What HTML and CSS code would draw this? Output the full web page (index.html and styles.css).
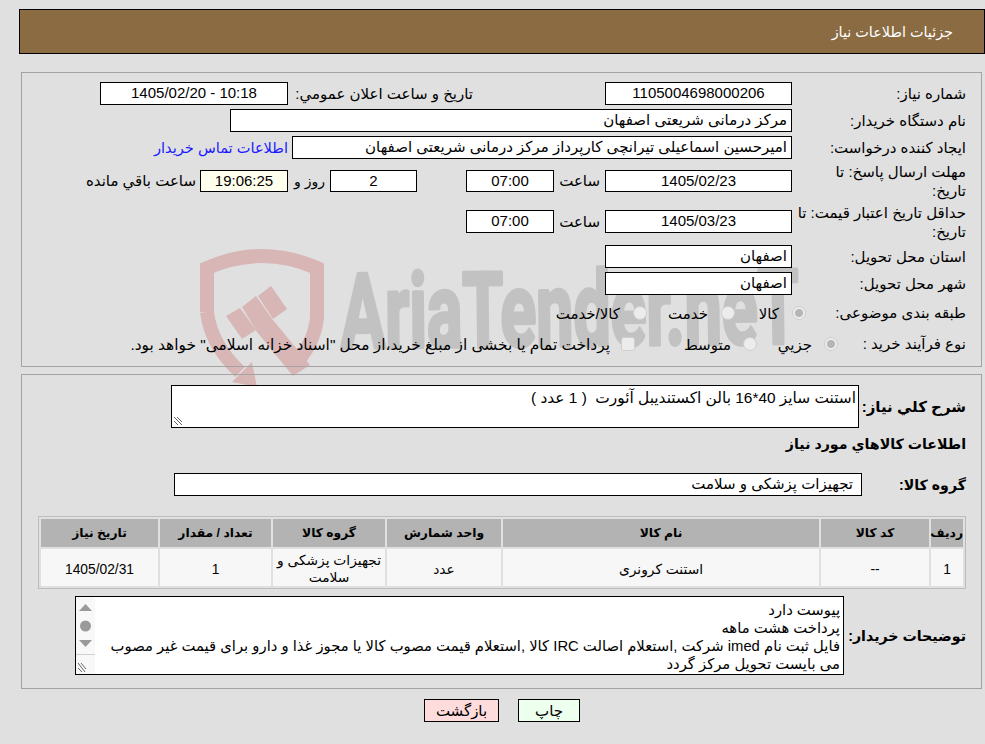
FILE: index.html
```html
<!DOCTYPE html>
<html lang="fa" dir="rtl">
<head>
<meta charset="utf-8">
<title>جزئیات اطلاعات نیاز</title>
<link rel="stylesheet" href="styles.css">
</head>
<body>
<svg class="watermark" viewBox="0 0 985 744" aria-hidden="true">
  <g class="wm-red">
    <path class="wm-line" d="M207 312V268Q262 244 317 268V318Q314 345 293 366"/>
    <path class="wm-line" d="M207 312Q211 345 240 372"/>
    <polygon points="252,362 257,387 232,382"/>
    <polygon points="226,316 240,308 256,330 242,339"/>
    <polygon points="242,307 256,296 273,320 310,365 293,376 257,332"/>
    <polygon points="258,296 271,286 287,309 273,319"/>
  </g>
  <text class="wm-text" x="341" y="348" textLength="458" lengthAdjust="spacingAndGlyphs" transform="rotate(-0.6 341 348)">AriaTender.neT</text>
</svg>
<header class="title-bar"><span>جزئیات اطلاعات نیاز</span></header>

<section class="panel panel-top">
  <div class="row r23">
    <label class="lbl">شماره نیاز:</label>
    <div class="fld w187 center">1105004698000206</div>
    <label class="lbl-inline ms132">تاریخ و ساعت اعلان عمومي:</label>
    <div class="fld w188 center" dir="ltr">1405/02/20 - 10:18</div>
  </div>
  <div class="row r23">
    <label class="lbl">نام دستگاه خریدار:</label>
    <div class="fld w562">مرکز درمانی شریعتی اصفهان</div>
  </div>
  <div class="row r23">
    <label class="lbl">ایجاد کننده درخواست:</label>
    <div class="fld w500">امیرحسین اسماعیلی تیرانچی کارپرداز مرکز درمانی شریعتی اصفهان</div>
    <a class="contact" href="#">اطلاعات تماس خریدار</a>
  </div>
  <div class="row r36">
    <label class="lbl">مهلت ارسال پاسخ: تا<br>تاریخ:</label>
    <div class="fld w187 center h22">1405/02/23</div>
    <span class="t-hour">ساعت</span>
    <div class="fld w88 center h22">07:00</div>
    <div class="fld w87 center h22 ms49">2</div>
    <span class="t-day">روز و</span>
    <div class="fld w88 center h22 timer">19:06:25</div>
    <span class="t-left">ساعت باقي مانده</span>
  </div>
  <div class="row r37">
    <label class="lbl">حداقل تاریخ اعتبار قیمت: تا<br>تاریخ:</label>
    <div class="fld w187 center">1405/03/23</div>
    <span class="t-hour">ساعت</span>
    <div class="fld w88 center">07:00</div>
  </div>
  <div class="row r23">
    <label class="lbl">استان محل تحویل:</label>
    <div class="fld w187">اصفهان</div>
  </div>
  <div class="row r23">
    <label class="lbl">شهر محل تحویل:</label>
    <div class="fld w187">اصفهان</div>
  </div>
  <div class="row r30">
    <label class="lbl lbl-up">طبقه بندی موضوعی:</label>
    <div class="choices cat">
      <span class="opt"><i class="radio on"></i>کالا</span>
      <span class="opt"><i class="radio"></i>خدمت</span>
      <span class="opt"><i class="radio"></i>کالا/خدمت</span>
    </div>
  </div>
  <div class="row r24">
    <label class="lbl lbl-up">نوع فرآیند خرید :</label>
    <div class="choices proc">
      <span class="opt"><i class="radio on"></i>جزيي</span>
      <span class="opt"><i class="radio"></i>متوسط</span>
      <span class="opt opt-long"><i class="check"></i>پرداخت تمام یا بخشی از مبلغ خرید،از محل "اسناد خزانه اسلامی" خواهد بود.</span>
    </div>
  </div>
</section>

<section class="panel panel-bottom">
  <div class="row desc-row">
    <label class="lbl-b l107">شرح کلي نياز:</label>
    <div class="area area-desc">استنت سایز 40*16 بالن اکستندیبل آئورت&nbsp; ( 1 عدد )
      <svg class="grip" viewBox="0 0 10 10"><path d="M1 1L9 9M1 5L5 9M4 1L9 6"/></svg>
    </div>
  </div>
  <h2 class="sub">اطلاعات کالاهاي مورد نياز</h2>
  <div class="row group-row">
    <label class="lbl-b l104">گروه کالا:</label>
    <div class="fld w688 group">تجهیزات پزشکی و سلامت</div>
  </div>
  <table class="items">
    <colgroup>
      <col class="c1"><col class="c2"><col class="c3"><col class="c4"><col class="c5"><col class="c6"><col class="c7">
    </colgroup>
    <thead>
      <tr><th>ردیف</th><th>کد کالا</th><th>نام کالا</th><th>واحد شمارش</th><th>گروه کالا</th><th>تعداد / مقدار</th><th>تاریخ نیاز</th></tr>
    </thead>
    <tbody>
      <tr><td>1</td><td>--</td><td>استنت کرونری</td><td>عدد</td><td>تجهیزات پزشکی و سلامت</td><td>1</td><td>1405/02/31</td></tr>
    </tbody>
  </table>
  <div class="row notes-row">
    <label class="lbl-b l122">توضیحات خریدار:</label>
    <div class="area area-notes">
      <div class="notes-text">پیوست دارد<br>پرداخت هشت ماهه<br>فایل ثبت نام imed شرکت ,استعلام اصالت IRC کالا ,استعلام قیمت مصوب کالا یا مجوز غذا و دارو برای قیمت غیر مصوب<br>می بایست تحویل مرکز گردد</div>
      <div class="scroll">
        <svg class="scroll-svg" viewBox="0 0 19 77">
          <path class="sb-arrow" d="M3 14L9.500 7L16 14Z"/>
          <circle class="sb-arrow" cx="9.500" cy="29" r="5.500"/>
          <path class="sb-arrow" d="M3 43L16 43L9.500 50Z"/>
          <path class="sb-sep" d="M0 57.500H19"/>
          <path class="sb-grip" d="M2 66L9 75M2 71L6 75M5 66L10 72"/>
        </svg>
      </div>
    </div>
  </div>
</section>

<div class="actions">
  <button class="btn btn-print" type="button">چاپ</button>
  <button class="btn btn-back" type="button">بازگشت</button>
</div>
</body>
</html>
```
FILE: styles.css
```css
* { box-sizing: border-box; }
html, body { margin: 0; padding: 0; }
body {
  position: relative;
  width: 985px;
  height: 744px;
  overflow: hidden;
  background: #e0e0e0;
  color: #000;
  font-family: "Liberation Sans", "DejaVu Sans", sans-serif;
  font-size: 15px;
  line-height: 18px;
}
.watermark { position: absolute; left: 0; top: 0; width: 985px; height: 744px; z-index: -1; direction: ltr; }
.wm-red { fill: #d8b6b6; }
.wm-line { fill: none; stroke: #d8b6b6; stroke-width: 14; }
.wm-text {
  direction: ltr;
  text-anchor: start;
  font-family: Roboto, sans-serif;
  font-weight: 700;
  font-size: 104px;
  fill: #c2c2c2;
  stroke: #c2c2c2;
  stroke-width: 4;
  stroke-linejoin: round;
}

.title-bar {
  margin: 9px 0 0 19px;
  width: 966px;
  height: 45px;
  padding-right: 31px;
  display: flex;
  align-items: center;
  background: #8b6b42;
  border: 1px solid #000;
  color: #fff;
  font-size: 14.400px;
}

.panel { margin-right: 3px; width: 961px; border: 1px solid #a3a3a3; }
.panel-top { margin-top: 18px; height: 295px; padding: 9px 15px 0 0; display: flex; flex-direction: column; gap: 4px; }
.panel-bottom { margin-top: 7px; height: 315px; padding: 10px 15px 0 0; }

.row { display: flex; align-items: center; }
.r23 { height: 23px; }
.r36 { height: 36px; }
.r37 { height: 37px; margin-bottom: 1px; }
.r30 { height: 30px; }
.r24 { height: 24px; }

.lbl { width: 174px; flex: none; line-height: 19px; }
.lbl-up { margin-bottom: 3px; }
.lbl-inline { width: 180px; flex: none; margin-left: 5px; white-space: nowrap; }
.lbl-b { flex: none; font-weight: 700; font-size: 14.200px; white-space: nowrap; }
.l107 { width: 107px; font-size: 15px; }
.l104 { width: 104px; }
.l122 { width: 122px; }
.ms132 { margin-right: 132px; }
.ms49 { margin-right: 49px; }

.fld {
  height: 23px;
  flex: none;
  padding: 0 4px;
  background: #fff;
  border: 1px solid #000;
  line-height: 20px;
  white-space: nowrap;
}
.h22 { height: 22px; }
.center { text-align: center; }
.w187 { width: 187px; }
.w188 { width: 188px; }
.w88 { width: 88px; }
.w87 { width: 87px; }
.w562 { width: 562px; }
.w500 { width: 500px; }
.w688 { width: 688px; }
.timer { background: #ffffee; }

.contact { margin-right: 4px; color: #1a1aff; font-size: 14.600px; text-decoration: none; white-space: nowrap; }
.t-hour { width: 51px; padding-right: 5px; flex: none; }
.t-day { width: 42px; padding-right: 5px; flex: none; white-space: nowrap; font-size: 14px; }
.t-left { padding-right: 4px; white-space: nowrap; }

.choices { display: flex; align-items: center; white-space: nowrap; }
.opt { display: flex; align-items: center; }
.opt-long { font-size: 15.400px; }
.radio, .check {
  width: 14px;
  height: 14px;
  flex: none;
  margin-bottom: 3px;
  border: 1px solid #cfcfcf;
  background: #ececec;
}
.radio { border-radius: 50%; margin-left: 12px; }
.check { border-radius: 3px; margin-left: 11px; }
.radio.on { background: radial-gradient(circle, #b5b5b5 0 3.500px, #ececec 4.500px); }
.cat { margin-right: -14px; }
.cat .radio { margin-left: 13px; }
.cat .opt:nth-child(1) { width: 71px; }
.cat .opt:nth-child(2) { width: 88px; }
.proc { margin-right: -46px; }
.proc .opt:nth-child(1) { width: 81px; }
.proc .opt:nth-child(2) { width: 122px; }

.desc-row { height: 43px; }
.area { position: relative; flex: none; background: #fff; border: 1px solid #000; }
.area-desc { width: 688px; height: 43px; padding: 3px 2px 0 0; font-size: 15.400px; }
.grip { position: absolute; left: 1px; bottom: 1px; width: 10px; height: 10px; }
.grip path { fill: none; stroke: #666; stroke-width: 1; }
.sub { margin: 7px 0 0; height: 19px; font-size: 14.200px; line-height: 19px; font-weight: 700; }
.group-row { margin-top: 19px; height: 23px; }
.group { padding-right: 8px; }

.items {
  margin: 20px 0 0 0;
  width: 928px;
  table-layout: fixed;
  border-collapse: separate;
  border-spacing: 2px;
  border: 1px solid #bcbcbc;
}
.c1 { width: 32px; } .c2 { width: 108px; } .c3 { width: 316px; } .c4 { width: 114px; } .c5 { width: 112px; } .c6 { width: 111px; } .c7 { width: 117px; }
.items th { height: 28px; padding: 0; background: #b3b3b3; font-size: 12.300px; font-weight: 700; text-align: center; white-space: nowrap; }
.items td { height: 37px; padding: 3px 0 0; background: #f7f7f7; font-size: 13.800px; text-align: center; line-height: 17px; }

.notes-row { margin-top: 7px; height: 79px; }
.area-notes { width: 769px; height: 79px; display: flex; }
.notes-text { flex: 1; padding: 4px 3px 0 0; font-size: 14.800px; line-height: 18px; }
.scroll { width: 19px; flex: none; background: #f8f8f8; }
.scroll-svg { display: block; width: 19px; height: 77px; }
.sb-arrow { fill: #9a9a9a; }
.sb-sep { stroke: #d0d0d0; fill: none; }
.sb-grip { stroke: #666; fill: none; }

.actions { margin-top: 10px; padding-right: 405px; display: flex; gap: 19px; }
.btn { height: 23px; padding: 0; border: 1px solid #000; font: inherit; color: #000; }
.btn-print { width: 62px; background: #edffed; }
.btn-back { width: 75px; background: #ffdcdc; }
```
